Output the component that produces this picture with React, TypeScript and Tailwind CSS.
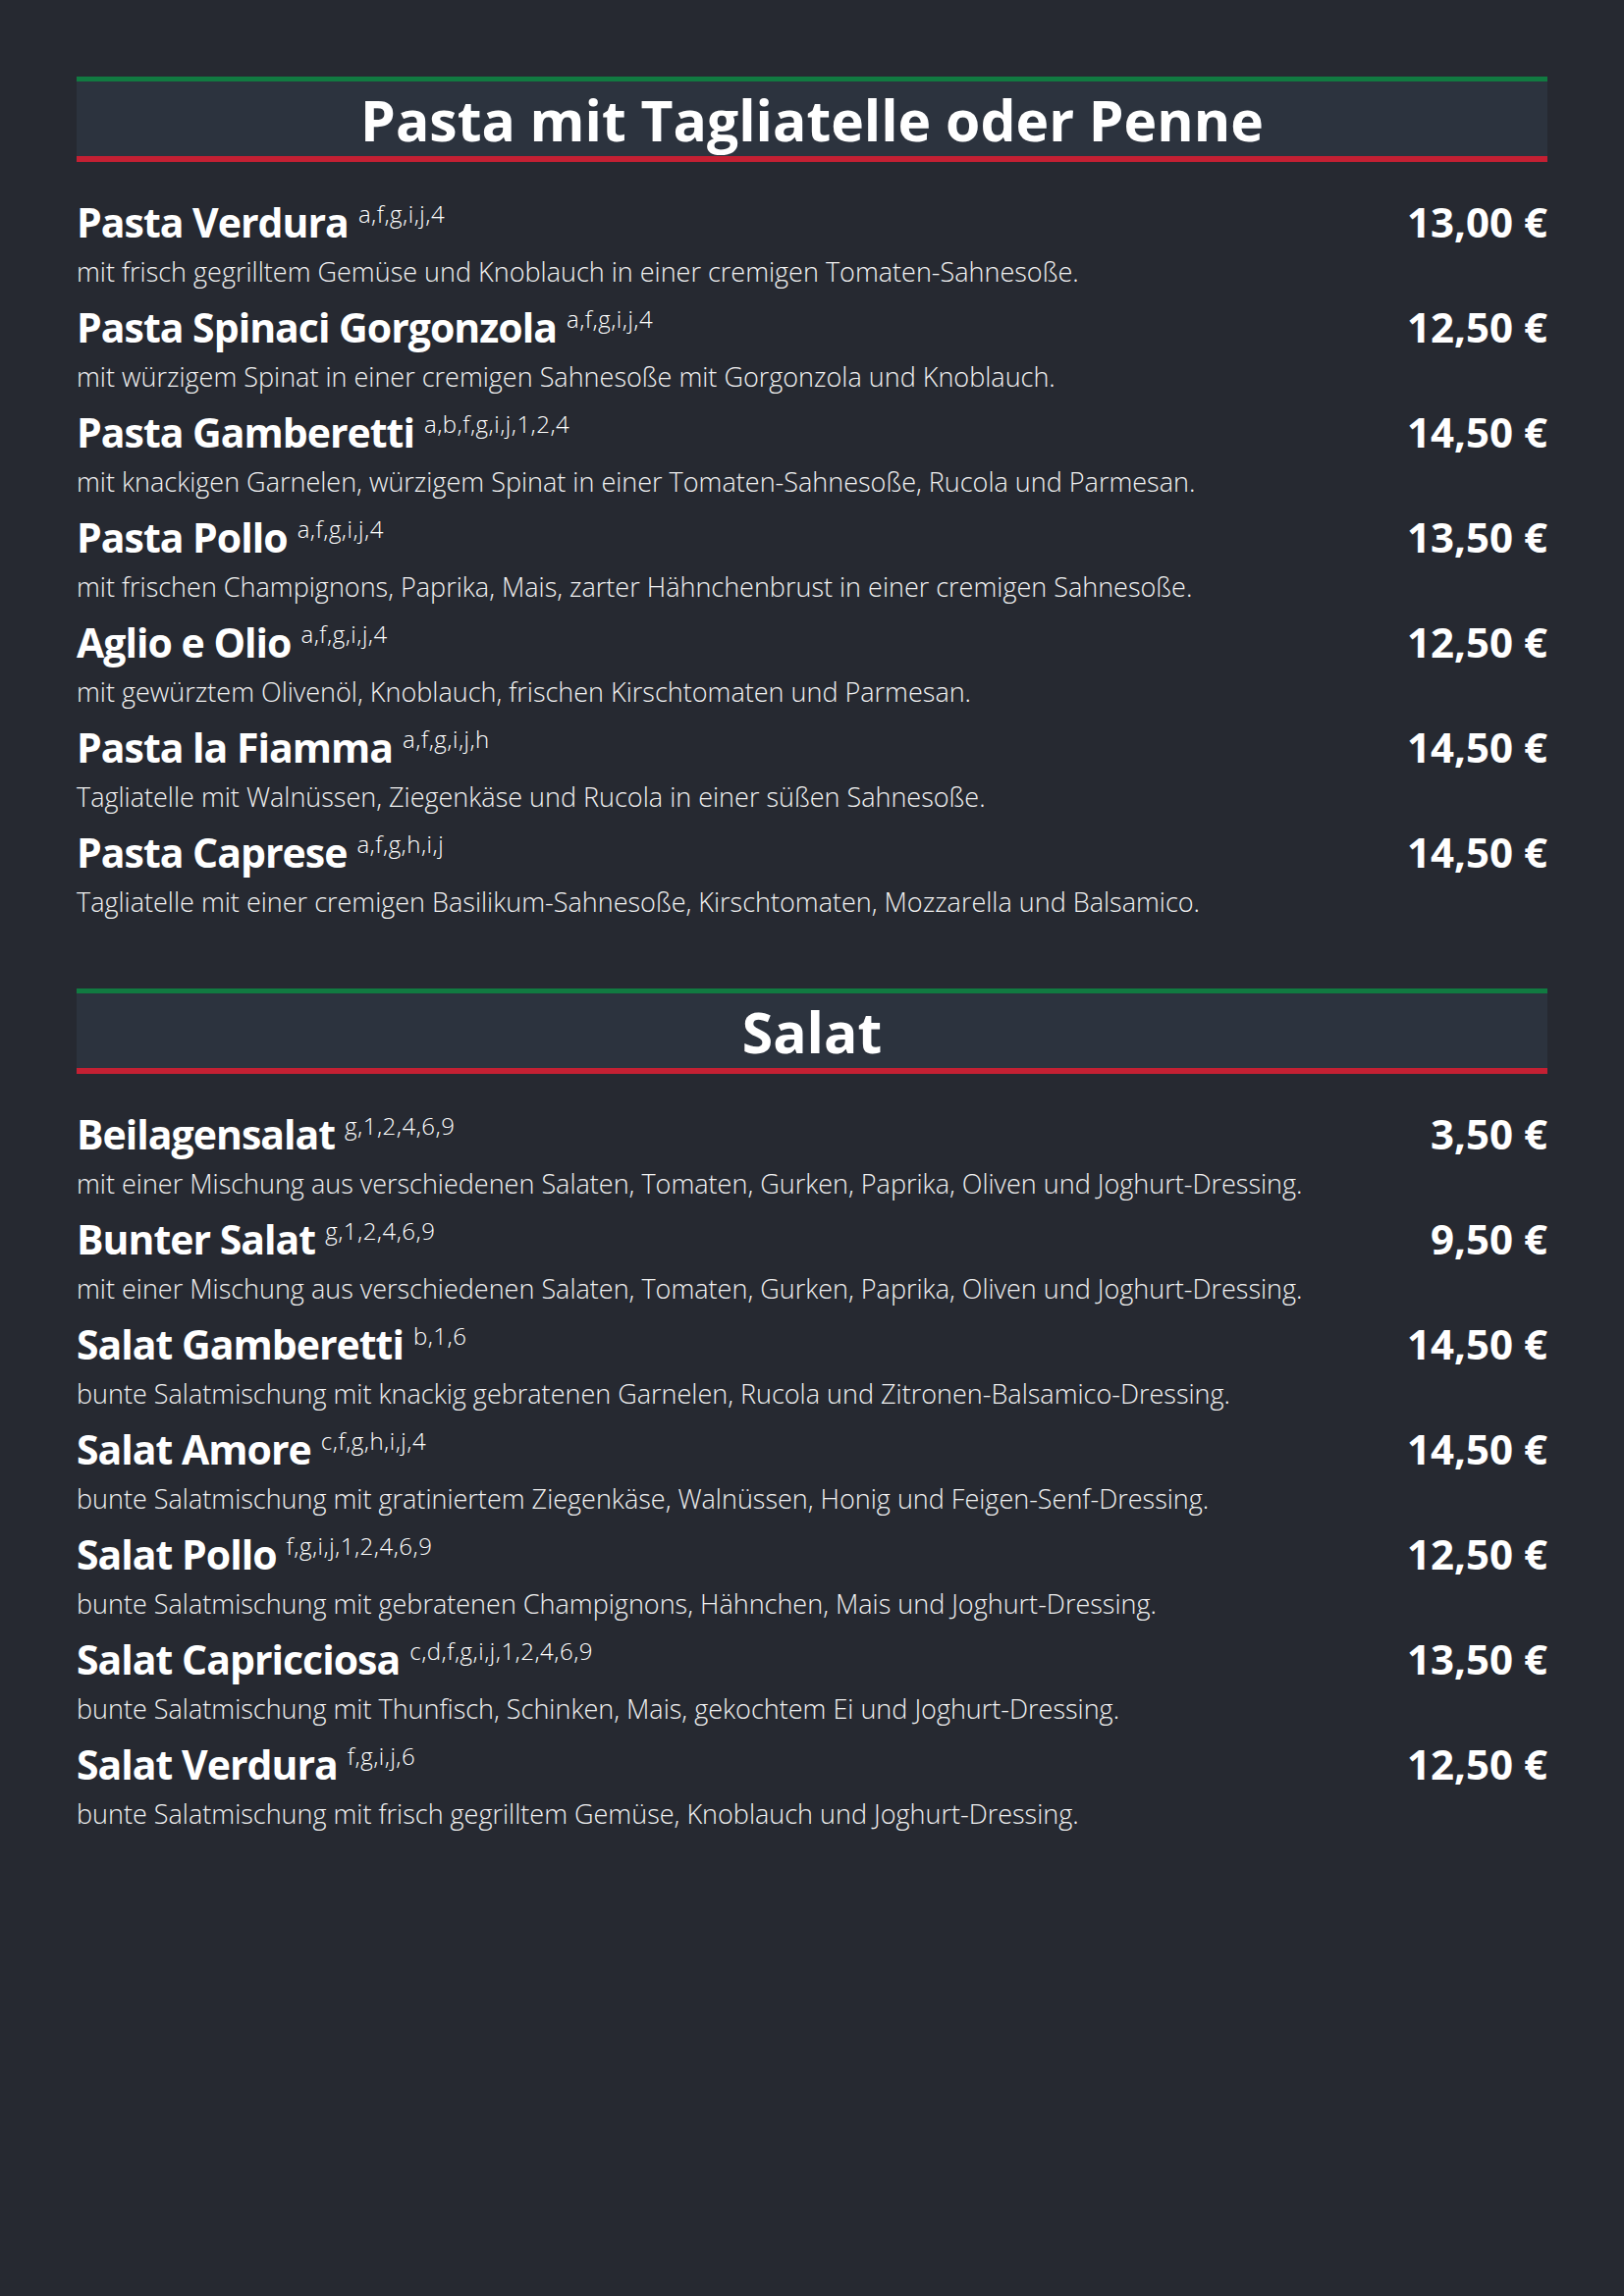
import React from "react";

type Item = { name: string; allergens: string; desc: string; price: string };

const pasta: Item[] = [
  { name: "Pasta Verdura", allergens: "a,f,g,i,j,4", desc: "mit frisch gegrilltem Gemüse und Knoblauch in einer cremigen Tomaten-Sahnesoße.", price: "13,00 €" },
  { name: "Pasta Spinaci Gorgonzola", allergens: "a,f,g,i,j,4", desc: "mit würzigem Spinat in einer cremigen Sahnesoße mit Gorgonzola und Knoblauch.", price: "12,50 €" },
  { name: "Pasta Gamberetti", allergens: "a,b,f,g,i,j,1,2,4", desc: "mit knackigen Garnelen, würzigem Spinat in einer Tomaten-Sahnesoße, Rucola und Parmesan.", price: "14,50 €" },
  { name: "Pasta Pollo", allergens: "a,f,g,i,j,4", desc: "mit frischen Champignons, Paprika, Mais, zarter Hähnchenbrust in einer cremigen Sahnesoße.", price: "13,50 €" },
  { name: "Aglio e Olio", allergens: "a,f,g,i,j,4", desc: "mit gewürztem Olivenöl, Knoblauch, frischen Kirschtomaten und Parmesan.", price: "12,50 €" },
  { name: "Pasta la Fiamma", allergens: "a,f,g,i,j,h", desc: "Tagliatelle mit Walnüssen, Ziegenkäse und Rucola in einer süßen Sahnesoße.", price: "14,50 €" },
  { name: "Pasta Caprese", allergens: "a,f,g,h,i,j", desc: "Tagliatelle mit einer cremigen Basilikum-Sahnesoße, Kirschtomaten, Mozzarella und Balsamico.", price: "14,50 €" },
];

const salat: Item[] = [
  { name: "Beilagensalat", allergens: "g,1,2,4,6,9", desc: "mit einer Mischung aus verschiedenen Salaten, Tomaten, Gurken, Paprika, Oliven und Joghurt-Dressing.", price: "3,50 €" },
  { name: "Bunter Salat", allergens: "g,1,2,4,6,9", desc: "mit einer Mischung aus verschiedenen Salaten, Tomaten, Gurken, Paprika, Oliven und Joghurt-Dressing.", price: "9,50 €" },
  { name: "Salat Gamberetti", allergens: "b,1,6", desc: "bunte Salatmischung mit knackig gebratenen Garnelen, Rucola und Zitronen-Balsamico-Dressing.", price: "14,50 €" },
  { name: "Salat Amore", allergens: "c,f,g,h,i,j,4", desc: "bunte Salatmischung mit gratiniertem Ziegenkäse, Walnüssen, Honig und Feigen-Senf-Dressing.", price: "14,50 €" },
  { name: "Salat Pollo", allergens: "f,g,i,j,1,2,4,6,9", desc: "bunte Salatmischung mit gebratenen Champignons, Hähnchen, Mais und Joghurt-Dressing.", price: "12,50 €" },
  { name: "Salat Capricciosa", allergens: "c,d,f,g,i,j,1,2,4,6,9", desc: "bunte Salatmischung mit Thunfisch, Schinken, Mais, gekochtem Ei und Joghurt-Dressing.", price: "13,50 €" },
  { name: "Salat Verdura", allergens: "f,g,i,j,6", desc: "bunte Salatmischung mit frisch gegrilltem Gemüse, Knoblauch und Joghurt-Dressing.", price: "12,50 €" },
];

function Header({ title }: { title: string }) {
  return (
    <div className="flex h-[87px] items-center justify-center border-t-[5px] border-b-[6px] border-t-[#117a41] border-b-[#c42033] bg-[#2c333e] pt-[2px]">
      <h2 className="font-['Open_Sans',sans-serif] text-[57px] font-bold leading-none text-white">{title}</h2>
    </div>
  );
}

function Row({ item }: { item: Item }) {
  return (
    <div className="flex flex-col">
      <div className="flex h-[48px] items-start justify-between">
        <div className="flex items-start">
          <span className="font-['Open_Sans',sans-serif] text-[41px] font-bold leading-[48px] tracking-[-1px] text-white">
            {item.name}
          </span>
          <span className="ml-[10px] mt-[3px] font-['Open_Sans',sans-serif] text-[24px] font-light leading-[26px] tracking-[0.5px] text-white">
            {item.allergens}
          </span>
        </div>
        <span className="font-['Open_Sans',sans-serif] text-[42px] font-bold leading-[48px] text-white">{item.price}</span>
      </div>
      <p className="mt-[12px] font-['Open_Sans',sans-serif] text-[27px] font-light leading-[30px] text-[#f1f1f1]">{item.desc}</p>
    </div>
  );
}

export default function App() {
  return (
    <div className="min-h-[2339px] w-full bg-[#262931] px-[78px] pt-[78px]">
      <Header title="Pasta mit Tagliatelle oder Penne" />
      <div className="mt-[37px] flex flex-col gap-[17px]">
        {pasta.map((it) => (
          <Row key={it.name} item={it} />
        ))}
      </div>
      <div className="mt-[73px]">
        <Header title="Salat" />
      </div>
      <div className="mt-[37px] flex flex-col gap-[17px]">
        {salat.map((it) => (
          <Row key={it.name} item={it} />
        ))}
      </div>
    </div>
  );
}
